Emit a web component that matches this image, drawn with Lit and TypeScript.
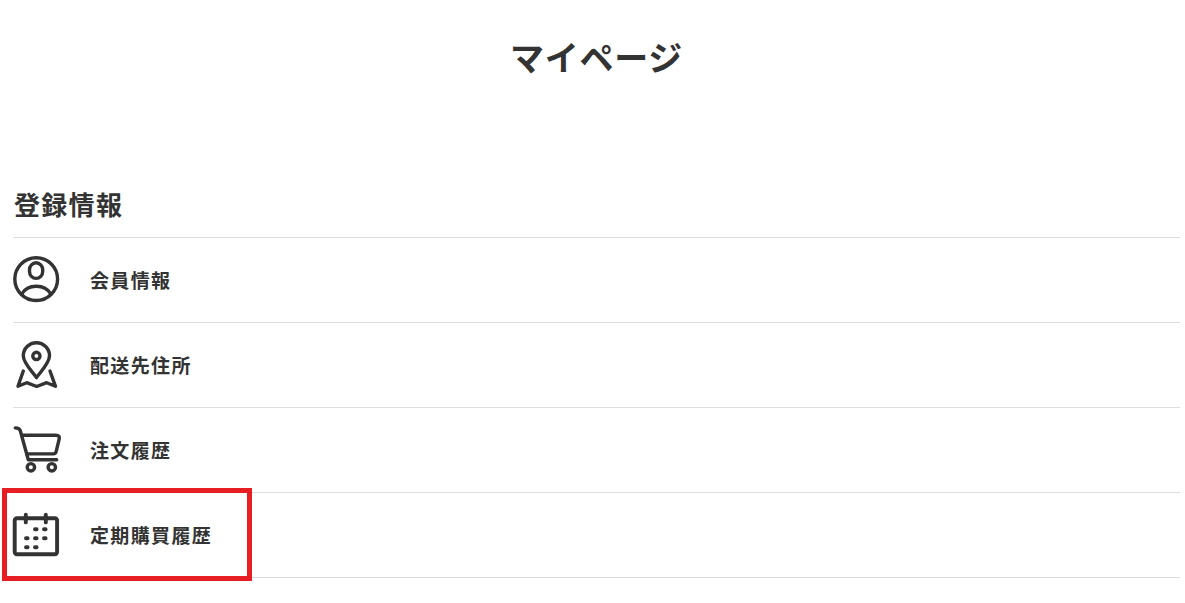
import { LitElement, html, css, svg } from 'lit';
import { customElement, property } from 'lit/decorators.js';

const icons = {
  member: svg`
    <circle cx="24.2" cy="24.1" r="21.4" />
    <rect x="17.5" y="7.8" width="13.2" height="15.6" rx="6.6" ry="7" />
    <path d="M9.8 39C12.5 34 18 31.2 24.3 31.2S36 34 38.8 39" />
  `,
  address: svg`
    <path d="M24.5 37.6C21 32.2 11.3 23.5 11.3 15.8a13.1 13.1 0 0 1 26.2 0C37.5 23.5 28 32.2 24.5 37.6z" />
    <circle cx="24.4" cy="15.9" r="3.6" />
    <path d="M11.3 31L6 46.3L14.7 42.7L24.7 46.5L34.7 42.7L43.5 46.3L38 31" />
  `,
  cart: svg`
    <path d="M3.3 2.9C6.2 2.9 7.6 3.5 8.3 5.8L16.3 34.7H44.7" />
    <path d="M10 10.2H43.8C46.8 10.2 47.7 11.6 47.2 14L44.2 26.4C43.8 28.2 43 28.9 41.4 28.9H14.7" />
    <circle cx="18.9" cy="42.3" r="3.7" />
    <circle cx="39.8" cy="42.3" r="3.7" />
  `,
  calendar: svg`
    <rect class="frame" x="2.7" y="8.2" width="42.4" height="36" rx="2.2" />
    <path class="frame" d="M13.8 4.8V12.4M33.8 4.8V12.4" />
    <path class="frame" d="M23 19.2h1.6M32 19.2h1.6M14 28.2h1.6M23 28.2h1.6M32 28.2h1.6M14 37.2h1.6M23 37.2h1.6" />
  `,
};

type IconName = keyof typeof icons;

interface MenuItem {
  icon: IconName;
  label: string;
  marked?: boolean;
}

@customElement('menu-icon')
export class MenuIcon extends LitElement {
  @property() name: IconName = 'member';

  static styles = css`
    :host {
      display: block;
      width: 50px;
      height: 50px;
      flex: none;
    }
    .icon {
      display: block;
      fill: none;
      stroke: #333;
      stroke-width: 3.4;
      stroke-linecap: round;
      stroke-linejoin: round;
    }
    .frame {
      stroke-width: 3.9;
    }
  `;

  render() {
    return html`
      <svg class="icon" width="50" height="50" viewBox="0 0 50 50">${icons[this.name]}</svg>
    `;
  }
}

@customElement('app-root')
export class AppRoot extends LitElement {
  static styles = css`
    :host {
      display: block;
      box-sizing: border-box;
      height: 603px;
      padding: 33px 5px 0 13px;
      overflow: hidden;
      background: #fff;
      color: #333;
      font-family: "Noto Sans CJK JP", sans-serif;
      font-weight: 700;
    }
    .title {
      margin: 0 0 106px;
      font-size: 34px;
      line-height: 48px;
      letter-spacing: 0.7px;
      text-align: center;
    }
    .heading {
      margin: 0;
      padding: 0 0 17px 1px;
      font-size: 26px;
      line-height: 33px;
      letter-spacing: 1.3px;
    }
    .menu {
      margin: 0;
      padding: 0;
      list-style: none;
      border-top: 1px solid #ddd;
    }
    .row {
      border-bottom: 1px solid #ddd;
    }
    .item {
      position: relative;
      display: flex;
      align-items: center;
      gap: 28px;
      height: 84px;
      margin-left: -1px;
      font-size: 19px;
      letter-spacing: 1.35px;
    }
    .label {
      padding-bottom: 2px;
    }
    .mark {
      position: absolute;
      left: -10px;
      top: -5px;
      box-sizing: border-box;
      width: 250px;
      height: 93px;
      border: 5px solid #e81e25;
    }
  `;

  items: MenuItem[] = [
    { icon: 'member', label: '会員情報' },
    { icon: 'address', label: '配送先住所' },
    { icon: 'cart', label: '注文履歴' },
    { icon: 'calendar', label: '定期購買履歴', marked: true },
  ];

  render() {
    return html`
      <h1 class="title">マイページ</h1>
      <h2 class="heading">登録情報</h2>
      <ul class="menu">
        ${this.items.map(item => html`
          <li class="row">
            <div class="item">
              <menu-icon .name=${item.icon}></menu-icon>
              <span class="label">${item.label}</span>
              ${item.marked ? html`<div class="mark"></div>` : ''}
            </div>
          </li>
        `)}
      </ul>
    `;
  }
}
